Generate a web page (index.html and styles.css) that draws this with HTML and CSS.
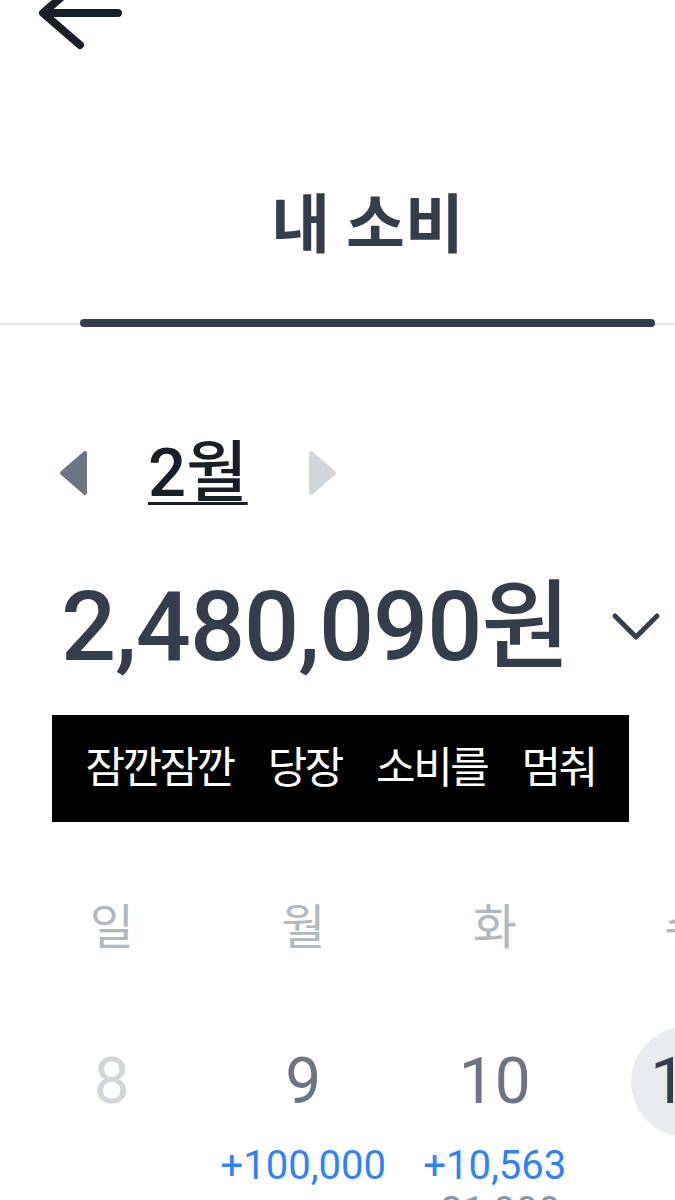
FILE: index.html
```html
<!DOCTYPE html>
<html lang="ko">
<head>
  <meta charset="UTF-8">
  <title>내 소비</title>
  <link rel="stylesheet" href="styles.css">
</head>
<body>
  <header class="topbar">
    <button class="back-btn" type="button" aria-label="뒤로">
      <svg width="100" height="80" viewBox="0 0 100 80">
        <path d="M88 40 H14 M50 8 L13 40 L50 72" fill="none" stroke="#191f28" stroke-width="8" stroke-linecap="round" stroke-linejoin="round"/>
      </svg>
    </button>
  </header>

  <nav class="tabs">
    <div class="tab active">내 소비</div>
  </nav>

  <section class="summary">
    <div class="month-nav">
      <svg class="arrow" width="30" height="48" viewBox="0 0 30 48">
        <path d="M27 4 L4 24 L27 44 Z" fill="#6b7684" stroke="#6b7684" stroke-width="4" stroke-linejoin="round"/>
      </svg>
      <span class="month">2월</span>
      <svg class="arrow" width="30" height="48" viewBox="0 0 30 48">
        <path d="M3 4 L26 24 L3 44 Z" fill="#d1d6db" stroke="#d1d6db" stroke-width="4" stroke-linejoin="round"/>
      </svg>
    </div>

    <div class="total-row">
      <span class="total">2,480,090원</span>
      <svg class="chevron" width="50" height="30" viewBox="0 0 50 30">
        <path d="M4 4 L25 25 L46 4" fill="none" stroke="#333d4b" stroke-width="5" stroke-linecap="round" stroke-linejoin="round"/>
      </svg>
    </div>

    <div class="caption">잠깐잠깐 당장 소비를 멈춰</div>
  </section>

  <section class="calendar">
    <div class="week-head">
      <span>일</span><span>월</span><span>화</span><span>수</span><span>목</span><span>금</span><span>토</span>
    </div>
    <div class="week">
      <div class="day">
        <span class="num muted">8</span>
      </div>
      <div class="day">
        <span class="num">9</span>
        <span class="income">+100,000</span>
      </div>
      <div class="day">
        <span class="num">10</span>
        <span class="income">+10,563</span>
        <span class="spend">-21,000</span>
      </div>
      <div class="day">
        <span class="num today">11</span>
      </div>
      <div class="day"><span class="num future">12</span></div>
      <div class="day"><span class="num future">13</span></div>
      <div class="day"><span class="num future">14</span></div>
    </div>
  </section>
</body>
</html>
```

FILE: styles.css
```css
body {
  margin: 0;
  width: 675px;
  overflow: hidden;
  background-color: #fff;
  font-family: Roboto, "Noto Sans CJK KR", sans-serif;
  color: #333d4b;
}
.topbar {
  display: flow-root;
  height: 60px;
}
.back-btn {
  display: block;
  margin: -27px 0 0 30px;
  padding: 0;
  border: none;
  background: none;
}
.back-btn svg {
  display: block;
}
.tabs {
  height: 265px;
  box-sizing: border-box;
  border-bottom: 2px solid #e5e8eb;
  padding-left: 80px;
  padding-right: 20px;
}
.tab {
  position: relative;
  height: 265px;
  box-sizing: border-box;
  padding-top: 131px;
  text-align: center;
  font-size: 64px;
  font-weight: 700;
  line-height: 70px;
  color: #333d4b;
}
.tab.active::after {
  content: "";
  position: absolute;
  left: 0;
  right: 0;
  bottom: -2px;
  height: 8px;
  border-radius: 4px;
  background-color: #333d4b;
}
.summary {
  padding-top: 112px;
}
.month-nav {
  display: flex;
  align-items: center;
  gap: 60px;
  padding-left: 58px;
  height: 72px;
}
.arrow {
  display: block;
}
.month {
  font-size: 67px;
  font-weight: 500;
  line-height: 72px;
  color: #191f28;
  text-decoration: underline;
  text-decoration-thickness: 3px;
  text-underline-offset: 6px;
}
.total-row {
  display: flex;
  align-items: center;
  justify-content: space-between;
  margin-top: 68px;
  padding-left: 61px;
  padding-right: 14px;
  height: 100px;
}
.total {
  font-size: 97px;
  font-weight: 500;
  line-height: 100px;
  letter-spacing: -1px;
  color: #333d4b;
}
.chevron {
  display: block;
}
.caption {
  margin: 38px 0 0 52px;
  width: 577px;
  height: 107px;
  background-color: #000;
  color: #fff;
  font-size: 43px;
  line-height: 107px;
  letter-spacing: -2.5px;
  word-spacing: 26px;
  text-align: center;
  white-space: pre;
}
.calendar {
  margin-top: 76px;
  margin-left: 16px;
  width: 1341px;
}
.week-head, .week {
  display: grid;
  grid-template-columns: repeat(7, 191.5px);
}
.week-head span {
  text-align: center;
  font-size: 48px;
  line-height: 60px;
  color: #b0b8c1;
}
.week {
  margin-top: 69px;
}
.day {
  display: flex;
  flex-direction: column;
  align-items: center;
}
.num {
  width: 110px;
  height: 110px;
  border-radius: 50%;
  text-align: center;
  font-size: 64px;
  line-height: 110px;
  color: #6b7684;
}
.num.muted {
  color: #d1d6db;
}
.num.today {
  background-color: #e9ebee;
  color: #333d4b;
}
.num.future {
  color: #d1d6db;
}
.income, .spend {
  font-size: 40px;
  line-height: 46px;
  white-space: nowrap;
}
.income {
  margin-top: 6px;
  color: #3182f6;
}
.spend {
  color: #8b95a1;
}
```
